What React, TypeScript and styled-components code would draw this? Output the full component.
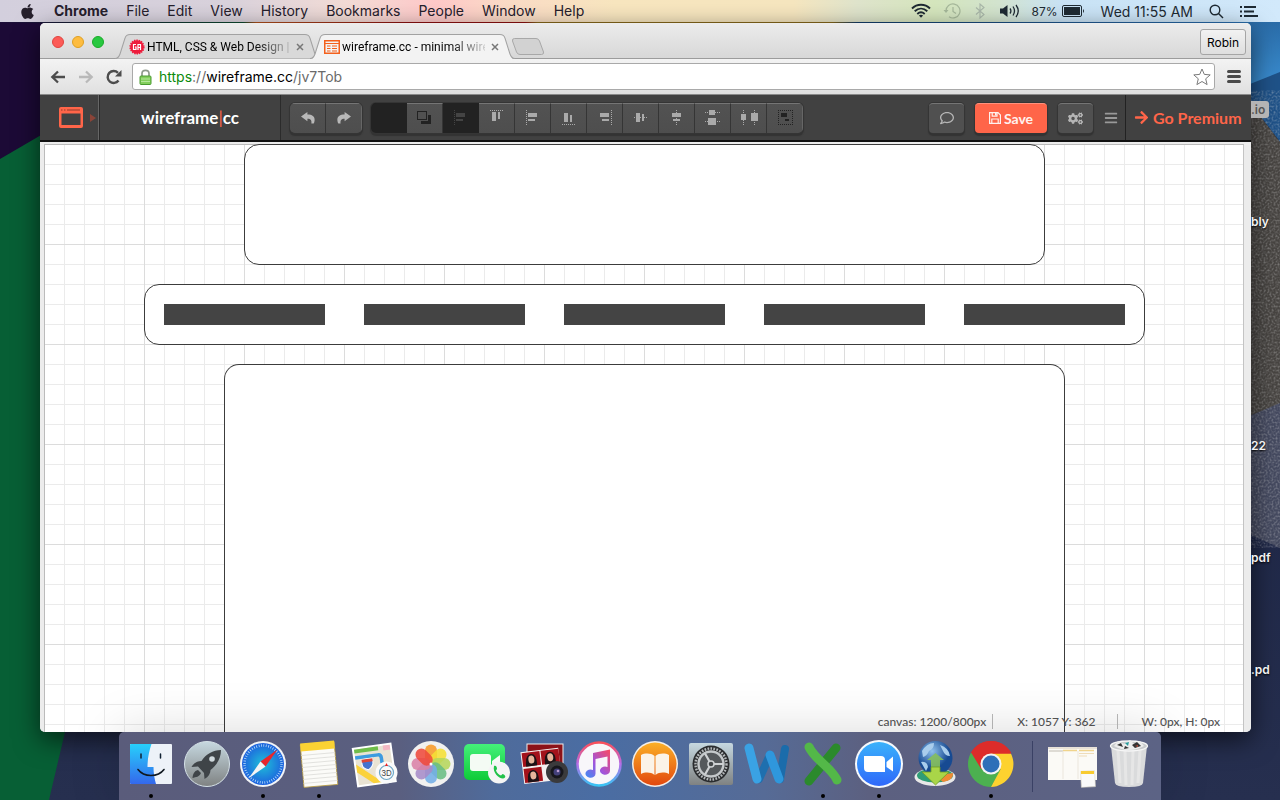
import React from "react";
import styled, { createGlobalStyle, css } from "styled-components";
import { FaApple, FaArrowRight, FaBars, FaRegComment, FaCogs } from "react-icons/fa";

const Global = createGlobalStyle`
  *, *::before, *::after { box-sizing: border-box; }
  body { margin: 0; font-family: Inter, Roboto, "Liberation Sans", sans-serif; }
  button { font: inherit; color: inherit; margin: 0; padding: 0; border: 0; background: none; cursor: pointer; }
  svg { display: block; flex: none; }
`;

/* ---------- desktop ---------- */

const Desktop = styled.div`
  position: relative;
  isolation: isolate;
  display: flex;
  flex-direction: column;
  min-height: 100vh;
  overflow: hidden;
`;

const WallpaperSvg = styled.svg`
  position: absolute;
  inset: 0;
  width: 100%;
  height: 100%;
  z-index: -1;
`;

const Wallpaper = () => (
  <WallpaperSvg viewBox="0 0 1280 800" preserveAspectRatio="none" aria-hidden="true">
    <defs>
      <linearGradient id="wStrip">
        <stop offset="0" stopColor="#1c0d38" />
        <stop offset=".19" stopColor="#0d4a30" />
        <stop offset=".2" stopColor="#b0501c" />
        <stop offset=".32" stopColor="#8c1010" />
        <stop offset=".41" stopColor="#8c1010" />
        <stop offset=".42" stopColor="#86681a" />
        <stop offset=".65" stopColor="#86681a" />
        <stop offset=".67" stopColor="#123c68" />
        <stop offset="1" stopColor="#2b72b5" />
      </linearGradient>
      <linearGradient id="wBlue" x1="0" y1="0" x2="0" y2="1">
        <stop offset="0" stopColor="#2a6ca8" />
        <stop offset="1" stopColor="#3b8fd2" />
      </linearGradient>
      <linearGradient id="wNavy" x1="0" y1="0" x2="0" y2="1">
        <stop offset="0" stopColor="#151d3c" />
        <stop offset="1" stopColor="#262f4f" />
      </linearGradient>
      <filter id="wNoise" x="0" y="0" width="100%" height="100%">
        <feTurbulence type="fractalNoise" baseFrequency=".5" numOctaves="2" />
        <feColorMatrix values="0 0 0 0 .75  0 0 0 0 .75  0 0 0 0 .75  1.6 0 0 0 -.65" />
      </filter>
    </defs>
    <rect width="1280" height="800" fill="url(#wNavy)" />
    <rect width="1280" height="30" fill="url(#wStrip)" />
    <path d="M0 23H60V125L0 160Z" fill="#1c0a36" />
    <path d="M0 159L60 124V732H65L49 800H0Z" fill="#075f35" />
    <path d="M1240 22H1280V75L1240 88Z" fill="url(#wBlue)" />
    <path d="M1240 88L1280 72V142L1240 90Z" fill="#1f5288" />
    <path d="M1240 90L1280 142V404L1240 420Z" fill="#484542" />
    <path d="M1240 420L1280 403V548L1240 530Z" fill="#454a60" />
    <path d="M1240 90L1280 142V548L1240 530Z" filter="url(#wNoise)" opacity=".45" />
  </WallpaperSvg>
);

/* ---------- menu bar ---------- */

const MenuBar = styled.header`
  display: flex;
  align-items: center;
  justify-content: space-between;
  height: 22px;
  padding: 0 22px 0 19px;
  font-size: 14px;
  color: #26202c;
  background: linear-gradient(90deg, #d3cfdd 0, #d9d2dc 18%, #f3dcd6 27%, #ffc9c9 34%, #fbdcc6 40%, #f8e6bf 48%, #f6e6bf 62%, #dfe4cc 67%, #d5e6bd 73%, #d3e4cf 78%, #c9e3f6 83%, #d2e9fb 100%);
`;

const MenuList = styled.nav`
  display: flex;
  align-items: center;
  gap: 18px;
`;

const MenuItem = styled.button<{ $app?: boolean }>`
  font-weight: ${(p) => (p.$app ? 700 : 400)};
  line-height: 22px;
`;

const StatusList = styled.div`
  display: flex;
  align-items: center;
  gap: 16px;
  color: #1e2a33;
`;

const StatusIcons = styled.div`
  display: flex;
  align-items: center;
  gap: 12px;
`;

const Battery = styled.span`
  display: flex;
  align-items: center;
  gap: 4px;
  font-size: 12px;
`;

/* ---------- browser window ---------- */

const Workspace = styled.div`
  display: flex;
  flex: 1;
  min-height: 0;
  padding-left: 40px;
`;

const Window = styled.main`
  display: flex;
  flex: 1;
  min-width: 0;
  flex-direction: column;
  margin-top: 1px;
  border-radius: 5px;
  overflow: hidden;
  background: #eee;
  box-shadow: 0 8px 26px rgba(0, 0, 0, 0.6);
`;

const DesktopFiles = styled.aside`
  width: 29px;
  padding-top: 31px;
  overflow: hidden;
`;

const FileLabel = styled.div<{ $selected?: boolean }>`
  display: flex;
  align-items: center;
  height: 112px;
  font-size: 12px;
  font-weight: 600;
  color: #f2f2f2;
  text-shadow: 0 1px 2px #000;
  span {
    padding: 1px 4px 1px 0;
    border-radius: 0 3px 3px 0;
    ${(p) => p.$selected && css`background: #b4b4b4; color: #555; text-shadow: none;`}
  }
`;

const TabStrip = styled.div`
  display: flex;
  align-items: flex-end;
  height: 36px;
  padding: 0 5px 0 12px;
  background: linear-gradient(#ececec, #d7d7d7);
  box-shadow: inset 0 -1px #9c9c9c;
`;

const Lights = styled.div`
  display: flex;
  align-self: center;
  gap: 8px;
  margin: 2px 11px 0 0;
`;

const Light = styled.button<{ $color: string; $edge: string }>`
  width: 12px;
  height: 12px;
  border-radius: 50%;
  background: ${(p) => p.$color};
  border: 1px solid ${(p) => p.$edge};
`;

const Tab = styled.div<{ $active?: boolean }>`
  position: relative;
  z-index: ${(p) => (p.$active ? 1 : 0)};
  display: flex;
  align-items: center;
  width: 205px;
  height: 25px;
  margin-right: -10px;
  padding: 0 12px 0 14px;
  gap: 2px;
  font-family: Roboto, sans-serif;
  font-size: 12px;
  color: #000;
`;

const TabShape = styled.svg`
  position: absolute;
  inset: 0;
  z-index: -1;
  width: 100%;
  height: 100%;
`;

const TabTitle = styled.span`
  flex: 1;
  min-width: 0;
  white-space: nowrap;
  mask-image: linear-gradient(90deg, #000 calc(100% - 36px), rgba(0, 0, 0, 0.15));
`;

const TabClose = styled.button`
  display: grid;
  place-items: center;
  width: 16px;
  height: 16px;
`;

const NewTab = styled.button`
  width: 34px;
  height: 18px;
  margin: 0 auto 3px 6px;
`;

const UserButton = styled.button`
  align-self: center;
  height: 26px;
  margin-top: 2px;
  padding: 0 6px;
  border: 1px solid #a5a5a5;
  border-radius: 3px;
  font-size: 12px;
  background: linear-gradient(#f2f2f2, #dedede);
`;

const NavBar = styled.div`
  display: flex;
  align-items: center;
  height: 36px;
  padding: 0 9px;
  gap: 10px;
  background: linear-gradient(#f3f3f3, #e0e0e0);
  border-bottom: 1px solid #8a8a8a;
`;

const NavButtons = styled.div`
  display: flex;
  gap: 11px;
`;

const NavButton = styled.button`
  display: grid;
  place-items: center;
  width: 17px;
  height: 18px;
`;

const AddressBar = styled.div`
  display: flex;
  flex: 1;
  align-items: center;
  gap: 7px;
  height: 27px;
  padding: 0 3px 0 6px;
  border: 1px solid #a9a9a9;
  border-radius: 3px;
  background: #fff;
`;

const Url = styled.div`
  flex: 1;
  font-size: 14px;
  color: #6a6a6a;
  outline: none;
`;
const Secure = styled.span`color: #0b8a0b;`;
const Host = styled.span`color: #000;`;

/* ---------- wireframe app ---------- */

const AppBar = styled.div`
  display: flex;
  align-items: stretch;
  height: 47px;
  background: #414141;
  border-bottom: 2px solid #111;
  font-family: Lato, sans-serif;
`;

const StencilButton = styled.button`
  display: flex;
  align-items: center;
  gap: 6px;
  width: 60px;
  padding-left: 18px;
  border-right: 1px solid #2b2b2b;
  box-shadow: inset -1px 0 #666;
`;

const Brand = styled.a`
  width: 181px;
  border-right: 1px solid #2b2b2b;
  text-align: center;
  line-height: 46px;
  font-size: 17px;
  font-weight: 700;
  color: #fff;
  text-decoration: none;
  i { font-style: normal; font-weight: 400; color: #ff6549; }
`;

const ToolGroup = styled.div`
  display: flex;
  align-self: center;
  margin: 0 0 0 9px;
  border-radius: 5px;
  overflow: hidden;
  box-shadow: 0 0 0 1px #353535, 0 2px 1px 1px #333;
`;

const Tool = styled.button<{ $off?: boolean }>`
  display: grid;
  place-items: center;
  width: 36px;
  height: 30px;
  color: #aaa;
  border-top: 1px solid #757575;
  border-right: 1px solid #353535;
  background: linear-gradient(#525252, #4e4e4e);
  &:last-child { border-right-color: #666; }
  ${(p) => p.$off && css`color: #444; background: #222; border-color: #222;`}
`;

const RightTools = styled.div`
  display: flex;
  align-items: center;
  gap: 11px;
  margin-left: auto;
`;

const BarButton = styled.button<{ $primary?: boolean }>`
  display: flex;
  align-items: center;
  justify-content: center;
  gap: 3px;
  width: ${(p) => (p.$primary ? 72 : 35)}px;
  height: 30px;
  border-radius: 4px;
  font-size: 14px;
  font-weight: 700;
  color: ${(p) => (p.$primary ? "#fff1ee" : "#b5b5b5")};
  background: ${(p) => (p.$primary ? "#ff6549" : "#505050")};
  border-top: 1px solid ${(p) => (p.$primary ? "#ff917c" : "#757575")};
  box-shadow: 0 0 0 1px #353535, 0 2px 1px 1px #333;
`;

const MenuButton = styled.button`color: #999;`;

const Premium = styled.a`
  display: flex;
  align-items: center;
  gap: 4px;
  align-self: stretch;
  width: 126px;
  margin-left: -4px;
  padding-left: 8px;
  border-left: 1px solid #222;
  white-space: nowrap;
  font-size: 16px;
  font-weight: 700;
  color: #ff6549;
  text-decoration: none;
`;

const CanvasArea = styled.section`
  position: relative;
  display: flex;
  flex: 1;
  min-height: 0;
  padding: 2px 7px 0 4px;
  overflow: hidden;
  background: #ececec;
`;

const Canvas = styled.div`
  display: flex;
  flex: 1;
  min-width: 0;
  flex-direction: column;
  align-items: center;
  gap: 19px;
  padding-left: 1px;
  box-shadow: inset 1px 1px #bbb, inset -1px 0 #c4c4c4;
  background:
    linear-gradient(#dcdcdc 1px, transparent 1px) 0 0 / 100px 100px,
    linear-gradient(90deg, #dcdcdc 1px, transparent 1px) 0 0 / 100px 100px,
    linear-gradient(#ebebeb 1px, transparent 1px) 0 0 / 20px 20px,
    linear-gradient(90deg, #ebebeb 1px, transparent 1px) 0 0 / 20px 20px,
    #fff;
`;

const Block = styled.div<{ $width: number; $height?: number }>`
  width: 100%;
  max-width: ${(p) => p.$width}px;
  border: 1px solid #3c3c3c;
  border-radius: 15px;
  background: #fff;
  ${(p) => (p.$height ? css`height: ${p.$height}px;` : css`flex: 1; border-bottom: 0; border-radius: 15px 15px 0 0;`)}
`;

const NavBlock = styled(Block)`
  display: flex;
  align-items: center;
  justify-content: space-between;
  padding: 0 19px;
`;

const NavItem = styled.div`
  width: 161px;
  height: 21px;
  background: #444;
`;

const StatusBar = styled.footer`
  position: absolute;
  right: 31px;
  bottom: 3px;
  display: flex;
  align-items: center;
  font: 500 12px/15px Lato, sans-serif;
  color: #555;
  span + span {
    margin-left: 6px;
    padding-left: 24px;
    border-left: 1px solid #bbb;
  }
  span + span + span { margin-left: 21px; }
`;

/* ---------- tool icons ---------- */

type Box = [number, number, number, number];
type Dots = [number, number, number, "h" | "v"];

const Glyph = ({ boxes, dots, color = "#aaa" }: { boxes: Box[]; dots: Dots[]; color?: string }) => (
  <svg width="36" height="28" viewBox="0 1 36 28" shapeRendering="crispEdges" aria-hidden="true">
    {boxes.map(([x, y, w, h]) => (
      <rect key={`${x}-${y}`} x={x} y={y} width={w} height={h} fill={color} />
    ))}
    {dots.map(([x, y, n, dir]) => (
      <path
        key={`${x}-${y}-${dir}`}
        d={dir === "h" ? `M${x} ${y + 0.5}h${n}` : `M${x + 0.5} ${y}v${n}`}
        stroke={color}
        strokeDasharray="1 1"
      />
    ))}
  </svg>
);

const alignTools: { label: string; off?: boolean; color?: string; boxes: Box[]; dots: Dots[] }[] = [
  { label: "Snap", off: true, color: "#444", boxes: [[13, 10, 9, 4], [13, 16, 7, 2]], dots: [[11, 7, 15, "v"]] },
  { label: "Align top", boxes: [[13, 9, 4, 9], [19, 9, 2, 7]], dots: [[11, 7, 13, "h"]] },
  { label: "Align left", boxes: [[13, 10, 9, 4], [13, 16, 7, 2]], dots: [[11, 7, 15, "v"]] },
  { label: "Align bottom", boxes: [[13, 10, 4, 9], [19, 12, 2, 7]], dots: [[11, 21, 13, "h"]] },
  { label: "Align right", boxes: [[13, 10, 9, 4], [15, 16, 7, 2]], dots: [[24, 7, 15, "v"]] },
  { label: "Align middle", boxes: [[13, 10, 4, 9], [19, 11, 2, 7]], dots: [[11, 14, 13, "h"]] },
  { label: "Align center", boxes: [[13, 10, 9, 4], [14, 16, 7, 2]], dots: [[17, 7, 15, "v"]] },
  { label: "Distribute vertically", boxes: [[14, 7, 6, 5], [13, 15, 8, 7]], dots: [[10, 9, 15, "h"], [10, 18, 15, "h"]] },
  { label: "Distribute horizontally", boxes: [[10, 11, 5, 6], [20, 10, 7, 8]], dots: [[12, 7, 15, "v"], [23, 7, 15, "v"]] },
  { label: "Group", color: "#222", boxes: [[14, 10, 6, 4], [18, 16, 4, 2]], dots: [[11, 7, 15, "h"], [11, 21, 15, "h"], [11, 7, 15, "v"], [25, 7, 15, "v"]] },
];

const CurveArrow = ({ flip }: { flip?: boolean }) => (
  <svg width="14" height="13" viewBox="0 0 14 13" aria-hidden="true">
    <path
      d="M0 4.6L6.4 0V2.6C11 2.6 14 4.6 13.6 8.4C13.5 9.7 13.2 10.6 12.7 11.6H10.4C10.8 8.4 10 6.8 6.4 6.8V9.2Z"
      fill="#b8b8b8"
      transform={flip ? "matrix(-1 0 0 1 14 0)" : undefined}
    />
  </svg>
);

/* ---------- dock ---------- */

const Dock = styled.nav`
  position: relative;
  display: flex;
  align-self: center;
  height: 68px;
  padding: 0 4px;
  border-radius: 5px 5px 0 0;
  background: linear-gradient(90deg, #5a5c7b 0, #5a5f80 27%, #4f6b9b 36%, #4a6da3 46%, #566b96 62%, #5c6080 72%, #5c6385 100%);
  box-shadow: 0 0 52px rgba(0, 0, 0, 0.15);
`;

const DockItem = styled.button<{ $running?: boolean }>`
  display: flex;
  flex-direction: column;
  align-items: center;
  gap: 2px;
  width: 56px;
  padding-top: 4px;
  &::after {
    content: "";
    width: 4px;
    height: 4px;
    border-radius: 50%;
    background: ${(p) => (p.$running ? "#000" : "transparent")};
  }
`;

const DockDivider = styled.div`
  width: 26px;
  padding: 9px 12px 8px 13px;
  &::before {
    content: "";
    display: block;
    height: 100%;
    background: #3a4165;
  }
`;

const petals = ["#f79a28", "#f5df34", "#b6d65b", "#69bd83", "#73aee6", "#a68cc8", "#d981a6", "#ee4a3c"];

const dockArt: { label: string; running?: boolean; art: React.ReactNode }[] = [
  {
    label: "Finder", running: true, art: (
      <>
        <rect x="7" y="8" width="42" height="40" rx="1" fill="#edf2f8" />
        <path d="M8 8H28.500C26 15 24.500 23 24.500 31H30.500C30.500 37 31.500 43 33 48H8Q7 48 7 47V9Q7 8 8 8Z" fill="url(#dFinder)" />
        <path d="M18 18v4M37.500 18v4" stroke="#123" strokeWidth="1.500" strokeLinecap="round" />
        <path d="M15 33.500C21 41.500 35 41.500 41 33.500" stroke="#101820" strokeWidth="1.600" fill="none" strokeLinecap="round" />
      </>
    ),
  },
  {
    label: "Launchpad", art: (
      <>
        <circle cx="28" cy="28" r="22.500" fill="url(#dSilver)" stroke="#d6e2e8" />
        <path d="M42 14C34 14 27 18 22.500 25C18 25 15 27 12.500 31L19 30.500L25 37L25.500 43C29.500 41 31.500 37.500 31.500 34C38 29 42 22 42 14Z" fill="#3f4448" />
        <path d="M19 34C15 35 14 38 13.500 42C17 41 20.500 41 22 37Z" fill="#3f4448" />
        <circle cx="33" cy="23" r="2.800" fill="#cfd8dc" />
      </>
    ),
  },
  {
    label: "Safari", running: true, art: (
      <>
        <circle cx="28" cy="28" r="23" fill="#f2f4f6" />
        <circle cx="28" cy="28" r="21" fill="url(#dSafari)" />
        <circle cx="28" cy="28" r="18.500" fill="none" stroke="#c8e8ff" strokeWidth="2.500" strokeDasharray=".7 1.720" />
        <path d="M42.500 13.500L30.500 30.500L25.500 25.500Z" fill="#e8262c" />
        <path d="M13.500 42.500L25.500 25.500L30.500 30.500Z" fill="#f4f4f4" />
      </>
    ),
  },
  {
    label: "Notes", running: true, art: (
      <g transform="rotate(-5 28 28)">
        <rect x="11" y="7" width="34" height="43" fill="#fbfbf8" stroke="#b69a3c" strokeWidth=".8" />
        <path d="M11 6H45V14H11Z" fill="#fbd233" />
        <path d="M11 18h34M11 22h34M11 26h34M11 30h34M11 34h34M11 38h34M11 42h34M11 46h34" stroke="#dcdcd8" strokeWidth=".8" />
      </g>
    ),
  },
  {
    label: "Maps", art: (
      <>
        <g transform="rotate(-8 27 27)">
          <rect x="8" y="10" width="38" height="38" fill="#e9e3d3" stroke="#fff" strokeWidth="2" />
          <path d="M9 11H33V15H9Z" fill="#6fbd4a" />
          <path d="M38 11H45V16H38Z" fill="#f4b8c4" />
          <path d="M9 19.500H32Q35 19.500 35 23V47" fill="none" stroke="#3d9be0" strokeWidth="3.500" />
          <path d="M9 26L33 47H24L9 34Z" fill="#fbd23b" />
          <path d="M15 22H26V27Q25 31 20.500 33Q15 31 15 27Z" fill="#4472cf" stroke="#fff" />
          <path d="M15 22H26V25H15Z" fill="#dc4638" />
        </g>
        <circle cx="39.500" cy="36.500" r="11" fill="#fafafa" />
        <circle cx="39.500" cy="36.500" r="7" fill="none" stroke="#6da6c6" strokeWidth="1.200" />
        <path d="M39.500 27L41 30H38Z" fill="#e22" />
        <text x="39.500" y="39.500" fontSize="8" textAnchor="middle" fill="#444" fontFamily="Inter">3D</text>
      </>
    ),
  },
  {
    label: "Photos", art: (
      <>
        <circle cx="28" cy="28" r="23" fill="#f1f1f0" />
        {petals.map((c, i) => (
          <rect key={c} x="22" y="8.500" width="12" height="19.500" rx="6" fill={c} opacity=".88" transform={`rotate(${i * 45} 28 28)`} />
        ))}
        <circle cx="28" cy="28" r="1.500" fill="#fff" />
      </>
    ),
  },
  {
    label: "FaceTime", art: (
      <>
        <rect x="5" y="8" width="41" height="36" rx="5" fill="url(#dGreen)" />
        <rect x="11" y="18" width="21" height="17" rx="3" fill="#f4fbf4" />
        <path d="M33 25L41 19V34L33 29Z" fill="#f4fbf4" />
        <circle cx="40" cy="36.500" r="11" fill="#f5f5f5" />
        <path d="M35 30C37 29 38 31 38 33L37 34.500C38 37 39.500 38.500 42 39.500L43.500 38C45.500 38.500 47 40 46 41.500C43 45 33 38 35 30Z" fill="#22c24a" />
      </>
    ),
  },
  {
    label: "Photo Booth", art: (
      <>
        <rect x="12" y="8" width="36" height="28" fill="#8c1218" stroke="#eee" />
        <g transform="rotate(-7 25 28)">
          <rect x="7" y="14" width="38" height="32" fill="#f4f0f0" />
          {[[8, 15], [27, 15], [8, 31]].map(([x, y]) => (
            <g key={`${x}${y}`}>
              <rect x={x} y={y} width="18" height="14" fill="#a3121b" />
              <path d={`M${x + 3} ${y + 14}Q${x + 3} ${y + 2} ${x + 9} ${y + 2}T${x + 14} ${y + 14}Z`} fill="#1d1216" />
              <ellipse cx={x + 9} cy={y + 7.5} rx="3" ry="4" fill="#e6b59b" />
            </g>
          ))}
        </g>
        <circle cx="42" cy="36" r="11" fill="#3a3a3c" />
        <circle cx="42" cy="36" r="6.500" fill="#17171d" />
        <circle cx="42" cy="36" r="3.500" fill="#43407a" />
        <circle cx="43" cy="35" r="1.300" fill="#b99bd0" />
      </>
    ),
  },
  {
    label: "iTunes", art: (
      <>
        <circle cx="28" cy="28" r="21.500" fill="#f8f6fa" stroke="url(#dTunes)" strokeWidth="2.500" />
        <path d="M22 17L39 13.500V34.500A5 4.200 0 1 1 36.500 31V20.500L24.500 23V37.500A5 4.200 0 1 1 22 34Z" fill="url(#dNote)" />
      </>
    ),
  },
  {
    label: "iBooks", art: (
      <>
        <circle cx="28" cy="28" r="23" fill="#f4efe9" />
        <circle cx="28" cy="28" r="21.500" fill="url(#dOrange)" />
        <path d="M27.500 20C24 17 18 17 14 19V38C18 36 24 36 27.500 39ZM28.500 20C32 17 38 17 42 19V38C38 36 32 36 28.500 39Z" fill="#fbf3e8" />
      </>
    ),
  },
  {
    label: "System Preferences", art: (
      <>
        <rect x="6" y="7" width="44" height="42" rx="2" fill="url(#dSilver)" />
        <circle cx="28" cy="28" r="18.500" fill="#2a2c2e" />
        <circle cx="28" cy="28" r="15.500" fill="none" stroke="#b4b8ba" strokeWidth="2.500" strokeDasharray="1.700 1.300" />
        <circle cx="28" cy="28" r="12.500" fill="#55595c" stroke="#c4c8ca" strokeWidth="2.500" />
        <path d="M28 28L40 28M28 28L22 17.500M28 28L22 38.500" stroke="#cfd2d4" strokeWidth="2.200" />
        <circle cx="28" cy="28" r="3" fill="#44484a" stroke="#cfd2d4" strokeWidth="1.500" />
      </>
    ),
  },
  {
    label: "Word", art: (
      <g fill="none" strokeLinecap="round" strokeWidth="8">
        <path d="M46 13L41 43" stroke="#1b6cab" />
        <path d="M31 19L20 43" stroke="#1e6fae" />
        <path d="M31 19L40 43" stroke="#2f97dc" strokeWidth="9" />
        <path d="M10 12L18 43" stroke="#3aa2e4" strokeWidth="9" />
      </g>
    ),
  },
  {
    label: "Excel", running: true, art: (
      <g fill="none" strokeLinecap="round" strokeWidth="9">
        <path d="M41 12L14 45" stroke="#2b8a2c" />
        <path d="M14 11C20 24 36 31 42 44" stroke="#53b848" />
      </g>
    ),
  },
  {
    label: "Zoom", running: true, art: (
      <>
        <circle cx="28" cy="28" r="24" fill="#f6f9fc" />
        <circle cx="28" cy="28" r="22" fill="url(#dZoom)" />
        <path d="M13 20H30Q34 20 34 24V36H17Q13 36 13 32ZM35.500 26L42 20.500V35.500L35.500 31Z" fill="#fff" />
      </>
    ),
  },
  {
    label: "Downloader", art: (
      <>
        <ellipse cx="28" cy="41" rx="20.500" ry="9" fill="#e8e8e8" />
        <ellipse cx="28" cy="39.500" rx="18" ry="7" fill="#2f9d76" />
        <path d="M28 39.500L46 37Q47 44 36 46Z" fill="#ef8a34" />
        <circle cx="28.500" cy="22" r="17" fill="url(#dGlobe)" />
        <path d="M15 15Q20 7 27 7Q27 13 22 15Q20 20 16 21ZM33 9Q42 12 43 20Q38 20 36 15ZM14 26Q20 25 21 31L19 35Z" fill="#a9cdec" />
        <path d="M28.500 17L37 24H33V31H24V24H20Z" fill="#86bf5c" opacity=".9" />
        <path d="M24 31H33V36H42L28.500 49L15 36H24Z" fill="#a9d548" stroke="#6e9c24" strokeWidth=".8" />
      </>
    ),
  },
  {
    label: "Chrome", running: true, art: (
      <>
        <path d="M28 28L8.100 16.500A23 23 0 0 1 47.900 16.500Z" fill="#dd2c2a" />
        <path d="M8.100 16.500A23 23 0 0 0 28 51L38 34L28 28Z" fill="#4cb050" />
        <path d="M28 51A23 23 0 0 0 47.900 17.500H28L37.500 33.500Z" fill="#fdd22f" />
        <path d="M8.100 16.500L18.500 33.500L28 17.500H48.400L47.900 16.500A23 23 0 0 0 8.100 16.500Z" fill="#dd2c2a" />
        <circle cx="28" cy="28" r="10.500" fill="#f4f4f4" />
        <circle cx="28" cy="28" r="8.500" fill="#2e6fb8" />
      </>
    ),
  },
];

const minimizedArt: { label: string; art: React.ReactNode }[] = [
  {
    label: "Stickies window", art: (
      <>
        <rect x="3" y="11" width="49" height="33" fill="#fbfaf6" />
        <path d="M3 11h49v2H3z" fill="#e8e2d8" />
        <path d="M4 15h14" stroke="#d5d0c8" strokeWidth="1.500" />
        <path d="M18 14.500h14M34 14.500h15" stroke="#f0d48c" strokeWidth="1.500" />
        <path d="M34 17.500h15M34 20h8" stroke="#efdcb8" />
        <path d="M18 15V43M33 15V43" stroke="#ebe6dc" />
        <rect x="36" y="35" width="14" height="16" fill="#fafafa" stroke="#ddd8c8" strokeWidth=".6" transform="rotate(-3 43 43)" />
        <path d="M36 35h13v3H36z" fill="#f8cb30" />
      </>
    ),
  },
  {
    label: "Trash", art: (
      <>
        <path d="M10 10L14 47Q14.500 51 28 51T42 47L46 10Z" fill="#dadbdc" />
        <path d="M17 14L19 47M24 15L25 49M32 15L31 49M39 14L37 47" stroke="#e6e6e6" strokeWidth="3" />
        <ellipse cx="28" cy="10" rx="18.500" ry="5" fill="#c9cbcd" stroke="#f6f6f6" strokeWidth="1.300" />
        <path d="M13 10L17 5L23 8L29 4L33 8L39 5L43 10Q36 14 28 14T13 10Z" fill="#ececec" />
        <path d="M16 9L20 7L22 11ZM31 9L36 6L40 10L34 12ZM24 10L28 12L23 13Z" fill="#333" />
        <path d="M24 7L28 6L27 10Z" fill="#2b9c9c" />
        <path d="M34 10L37 9L37 11Z" fill="#b4493a" />
      </>
    ),
  },
];

const HiddenDefs = styled.svg`
  position: absolute;
`;

const DockDefs = () => (
  <HiddenDefs width="0" height="0" aria-hidden="true">
    <defs>
      <linearGradient id="dFinder" x2="0" y2="1"><stop stopColor="#27d0fb" /><stop offset="1" stopColor="#3468ec" /></linearGradient>
      <linearGradient id="dSilver" x2="0" y2="1"><stop stopColor="#c6d8e0" /><stop offset="1" stopColor="#7f8282" /></linearGradient>
      <radialGradient id="dSafari"><stop stopColor="#1fc0d8" /><stop offset="1" stopColor="#1d62de" /></radialGradient>
      <linearGradient id="dGreen" x2="0" y2="1"><stop stopColor="#44f07a" /><stop offset="1" stopColor="#0ecb38" /></linearGradient>
      <linearGradient id="dTunes" x2="0" y2="1"><stop stopColor="#fb4f59" /><stop offset=".5" stopColor="#b66de8" /><stop offset="1" stopColor="#39c4f4" /></linearGradient>
      <linearGradient id="dNote" x1="1" x2="0" y2="1"><stop stopColor="#fb4a60" /><stop offset=".55" stopColor="#a154dc" /><stop offset="1" stopColor="#3d8cf4" /></linearGradient>
      <linearGradient id="dOrange" x2="0" y2="1"><stop stopColor="#fbaf26" /><stop offset="1" stopColor="#e2480e" /></linearGradient>
      <linearGradient id="dZoom" x2="0" y2="1"><stop stopColor="#3ab2fb" /><stop offset="1" stopColor="#2f68fa" /></linearGradient>
      <radialGradient id="dGlobe" cx=".4" cy=".3"><stop stopColor="#8fc0ec" /><stop offset="1" stopColor="#174a92" /></radialGradient>
    </defs>
  </HiddenDefs>
);

const CloseIcon = () => (
  <svg width="8" height="8" viewBox="0 0 8 8" aria-hidden="true">
    <path d="M1 1L7 7M7 1L1 7" stroke="#777" strokeWidth="1.500" />
  </svg>
);

const TabFrame = ({ active }: { active?: boolean }) => (
  <TabShape viewBox="0 0 204 25" preserveAspectRatio="none" aria-hidden="true">
    <path
      d="M0 24.500C3 24.500 4 23 5 20L10 4Q11 .5 15 .5H189Q193 .5 194 4L199 20C200 23 201 24.500 204 24.500"
      fill={active ? "#f3f3f3" : "#d9d9d9"}
      stroke="#a2a2a2"
    />
    {active && <path d="M3 24.500H201" stroke="#f3f3f3" />}
  </TabShape>
);

export default function App() {
  return (
    <Desktop>
      <Global />
      <Wallpaper />
      <DockDefs />
      <MenuBar>
        <MenuList>
          <MenuItem aria-label="Apple"><FaApple size={17} /></MenuItem>
          <MenuItem $app>Chrome</MenuItem>
          {["File", "Edit", "View", "History", "Bookmarks", "People", "Window", "Help"].map((m) => (
            <MenuItem key={m}>{m}</MenuItem>
          ))}
        </MenuList>
        <StatusList>
          <StatusIcons>
            <svg width="20" height="16" viewBox="0 0 20 16" fill="none" stroke="currentColor" strokeWidth="1.900" aria-hidden="true">
              <path d="M1 5.500C6 .5 14 .5 19 5.500M3.700 8.200C7.500 4.700 12.500 4.700 16.300 8.200M6.300 11C8.500 9 11.500 9 13.700 11" />
              <path d="M10 14.800L7.900 12.600Q10 11 12.100 12.600Z" fill="currentColor" stroke="none" />
            </svg>
            <svg width="18" height="16" viewBox="0 0 18 16" fill="none" stroke="#a6b89a" strokeWidth="1.200" aria-hidden="true">
              <path d="M3 8A7 7 0 1 1 6 13.700M10 4V8.500L13 10.500" />
              <path d="M.5 7H5.500L3 10Z" fill="#a6b89a" stroke="none" />
            </svg>
            <svg width="14" height="16" viewBox="-2 0 14 16" fill="none" stroke="#a9b7a9" strokeWidth="1.100" aria-hidden="true">
              <path d="M1 4.500L9 11.500L5 15V1L9 4.500L1 11.500" />
            </svg>
            <svg width="21" height="16" viewBox="0 0 21 16" fill="none" stroke="currentColor" strokeWidth="1.300" aria-hidden="true">
              <path d="M1 5.500H4L8.500 2V14L4 10.500H1Z" fill="currentColor" stroke="none" />
              <path d="M11 5.500Q12.800 8 11 10.500M14 3.500Q17 8 14 12.500M17 2Q21.500 8 17 14" />
            </svg>
            <Battery>
              87%
              <svg width="23" height="12" viewBox="0 0 23 12" aria-hidden="true">
                <rect x=".5" y=".5" width="19" height="11" rx="1.500" fill="none" stroke="#1e2a33" />
                <rect x="2" y="2" width="16" height="8" fill="#1e2a33" />
                <path d="M21 4Q23 6 21 8Z" fill="#1e2a33" />
              </svg>
            </Battery>
          </StatusIcons>
          <span>Wed 11:55 AM</span>
          <svg width="15" height="15" viewBox="0 0 15 15" fill="none" stroke="currentColor" strokeWidth="1.400" aria-hidden="true">
            <circle cx="6" cy="6" r="4.800" /><path d="M9.500 9.500L14 14" />
          </svg>
          <svg width="18" height="11" viewBox="0 0 18 11" stroke="currentColor" strokeWidth="2" aria-hidden="true">
            <path d="M0 1h2M0 5.500h2M0 10h2M4 1h12M4 5.500h10M4 10h14" />
          </svg>
        </StatusList>
      </MenuBar>

      <Workspace>
        <Window>
          <TabStrip>
            <Lights>
              <Light aria-label="Close" $color="#fc5b57" $edge="#e0443f" />
              <Light aria-label="Minimize" $color="#fdbc40" $edge="#dfa023" />
              <Light aria-label="Zoom" $color="#28c840" $edge="#1aab29" />
            </Lights>
            <Tab>
              <TabFrame />
              <svg width="16" height="16" viewBox="0 0 16 16" aria-hidden="true">
                <circle cx="8" cy="8" r="6.800" fill="#ee1c3c" stroke="#ee1c3c" strokeWidth="1.600" strokeDasharray="1.400 1" />
                <path d="M7 5.500H4.500V10.500H7V8H6M9 11V5.500H11.500V11M9 8.500H11.500" fill="none" stroke="#fff" strokeWidth="1.200" />
              </svg>
              <TabTitle>HTML, CSS &amp; Web Design |</TabTitle>
              <TabClose aria-label="Close tab"><CloseIcon /></TabClose>
            </Tab>
            <Tab $active>
              <TabFrame active />
              <svg width="16" height="14" viewBox="0 0 16 14" fill="none" stroke="#f4601c" aria-hidden="true">
                <rect x=".75" y=".75" width="14.500" height="12.500" strokeWidth="1.500" />
                <path d="M1 3.500H15M3 6h3.500M8 6h5M3 8.500h3.500M8 8.500h5M3 11h3.500M8 11h5" strokeWidth="1.200" />
              </svg>
              <TabTitle>wireframe.cc - minimal wire</TabTitle>
              <TabClose aria-label="Close tab"><CloseIcon /></TabClose>
            </Tab>
            <NewTab aria-label="New tab">
              <svg width="34" height="18" viewBox="0 0 34 18" aria-hidden="true">
                <path d="M3.500 .5H25Q27.500 .5 28.500 3L32.500 14Q33 16.500 30.500 16.500H9Q6.500 16.500 5.500 14L1.500 3Q1 .5 3.500 .5Z" fill="#d2d2d2" stroke="#a8a8a8" />
              </svg>
            </NewTab>
            <UserButton>Robin</UserButton>
          </TabStrip>

          <NavBar>
            <NavButtons>
              <NavButton aria-label="Back">
                <svg width="16" height="14" viewBox="0 0 16 14" fill="none" stroke="#4d4d4d" strokeWidth="2.300"><path d="M15 7H2.500M8 1.500L2.300 7L8 12.500" /></svg>
              </NavButton>
              <NavButton aria-label="Forward">
                <svg width="16" height="14" viewBox="0 0 16 14" fill="none" stroke="#b9b9b9" strokeWidth="2.300"><path d="M1 7H13.500M8 1.500L13.700 7L8 12.500" /></svg>
              </NavButton>
              <NavButton aria-label="Reload">
                <svg width="16" height="16" viewBox="0 0 16 16" fill="none" stroke="#4d4d4d" strokeWidth="2.400"><path d="M12.500 11.500A6 6 0 1 1 12 3.800" /><path d="M15.500 1V7.500H9Z" fill="#4d4d4d" stroke="none" /></svg>
              </NavButton>
            </NavButtons>
            <AddressBar>
              <svg width="13" height="16" viewBox="0 0 13 16" aria-hidden="true">
                <path d="M3 8V4.500Q3 1.300 6.500 1.300T10 4.500V8" fill="none" stroke="#8f9a8c" strokeWidth="1.700" />
                <rect x="1" y="7" width="11" height="8.500" rx="1" fill="#83cf5c" stroke="#4a9a30" />
                <path d="M2 10h9M2 12.500h9" stroke="#b4e69a" />
              </svg>
              <Url role="textbox" aria-label="Address" contentEditable suppressContentEditableWarning>
                <Secure>https</Secure>://<Host>wireframe.cc</Host>/jv7Tob
              </Url>
              <svg width="18" height="18" viewBox="0 0 18 18" aria-hidden="true">
                <path d="M9 1L11.300 6.400L17.200 6.900L12.700 10.800L14.100 16.600L9 13.500L3.900 16.600L5.300 10.800L.8 6.900L6.700 6.400Z" fill="#fff" stroke="#7a7a7a" strokeLinejoin="round" />
              </svg>
            </AddressBar>
            <NavButton aria-label="Menu">
              <svg width="14" height="13" viewBox="0 0 14 13" stroke="#4a4a4a" strokeWidth="3" strokeLinecap="round"><path d="M1.500 1.500h11M1.500 6.500h11M1.500 11.500h11" /></svg>
            </NavButton>
          </NavBar>

          <AppBar>
            <StencilButton aria-label="Stencil">
              <svg width="26" height="21" viewBox="0 0 26 21" aria-hidden="true">
                <path fillRule="evenodd" d="M3 0H23Q25 0 25 2V19Q25 21 23 21H3Q1 21 1 19V2Q1 0 3 0ZM3.500 6.500V18H22.500V6.500Z" fill="#ff6549" />
                <path d="M3 3h1.500M6 3h1.500M9 3h13" stroke="#8c3c2e" strokeWidth="1" />
              </svg>
              <svg width="6" height="8" viewBox="0 0 6 8" aria-hidden="true"><path d="M0 0L6 4L0 8Z" fill="#8b4438" /></svg>
            </StencilButton>
            <Brand href="#">wireframe<i>|</i>cc</Brand>
            <ToolGroup>
              <Tool aria-label="Undo"><CurveArrow /></Tool>
              <Tool aria-label="Redo"><CurveArrow flip /></Tool>
            </ToolGroup>
            <ToolGroup>
              <Tool $off aria-label="Bring forward" />
              <Tool aria-label="Duplicate">
                <svg width="36" height="28" viewBox="0 1 36 28" shapeRendering="crispEdges" aria-hidden="true">
                  <rect x="14" y="12" width="10" height="9" fill="#222" />
                  <rect x="10" y="8" width="11" height="10" fill="#515151" />
                  <rect x="10" y="8" width="10" height="9" fill="#222" />
                  <rect x="11" y="9" width="8" height="7" fill="#515151" />
                </svg>
              </Tool>
              {alignTools.map((t) => (
                <Tool key={t.label} $off={t.off} aria-label={t.label}>
                  <Glyph boxes={t.boxes} dots={t.dots} color={t.color} />
                </Tool>
              ))}
            </ToolGroup>
            <RightTools>
              <BarButton aria-label="Comments"><FaRegComment size={14} /></BarButton>
              <BarButton $primary>
                <svg width="12" height="12" viewBox="0 0 12 12" fill="none" stroke="currentColor" strokeWidth="1.200" aria-hidden="true">
                  <path d="M.6 .6H9L11.400 3V11.400H.6ZM2.800 11.400V7H9.200V11.400M3.200 .6V4.200H8V.6" /><path d="M6 1h1.500v2.500H6z" fill="currentColor" stroke="none" />
                </svg>
                Save
              </BarButton>
              <BarButton aria-label="Settings"><FaCogs size={15} /></BarButton>
              <MenuButton aria-label="More"><FaBars size={14} /></MenuButton>
              <Premium href="#"><FaArrowRight size={15} />Go Premium</Premium>
            </RightTools>
          </AppBar>

          <CanvasArea>
            <Canvas>
              <Block $width={801} $height={121} />
              <NavBlock $width={1001} $height={61}>
                {[0, 1, 2, 3, 4].map((n) => <NavItem key={n} />)}
              </NavBlock>
              <Block $width={841} />
            </Canvas>
            <StatusBar>
              <span>canvas: 1200/800px</span>
              <span>X: 1057 Y: 362</span>
              <span>W: 0px, H: 0px</span>
            </StatusBar>
          </CanvasArea>
        </Window>
        <DesktopFiles>
          <FileLabel $selected><span>.io</span></FileLabel>
          <FileLabel><span>bly</span></FileLabel>
          <FileLabel />
          <FileLabel><span>22</span></FileLabel>
          <FileLabel><span>pdf</span></FileLabel>
          <FileLabel><span>.pd</span></FileLabel>
        </DesktopFiles>
      </Workspace>

      <Dock aria-label="Dock">
        {dockArt.map((d) => (
          <DockItem key={d.label} $running={d.running} aria-label={d.label}>
            <svg width="56" height="56" viewBox="0 0 56 56" aria-hidden="true">{d.art}</svg>
          </DockItem>
        ))}
        <DockDivider />
        {minimizedArt.map((d) => (
          <DockItem key={d.label} aria-label={d.label}>
            <svg width="56" height="56" viewBox="0 0 56 56" aria-hidden="true">{d.art}</svg>
          </DockItem>
        ))}
      </Dock>
    </Desktop>
  );
}
